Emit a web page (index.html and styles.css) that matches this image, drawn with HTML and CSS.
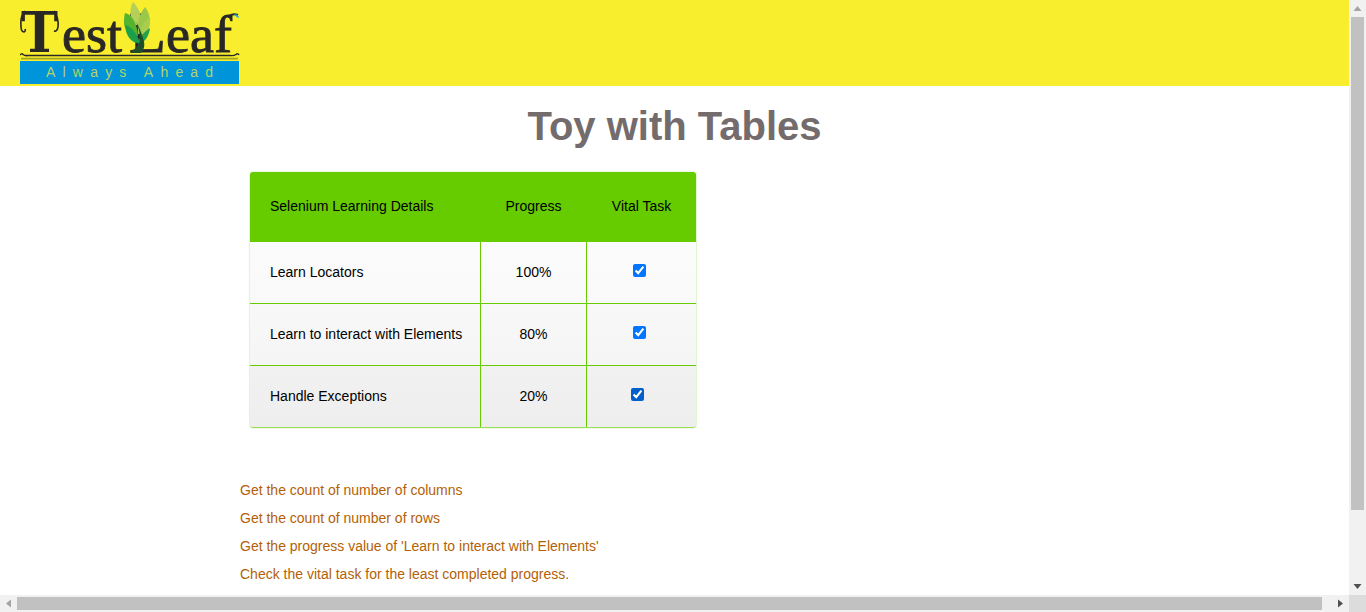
FILE: index.html
```html
<!DOCTYPE html>
<html lang="en">
<head>
<meta charset="utf-8">
<title>Toy with Tables</title>
<link rel="stylesheet" href="styles.css">
</head>
<body>
<div class="window">
  <main class="page">
    <header class="topbar">
      <svg class="logo" width="220" height="86" viewBox="0 0 220 86" role="img" aria-label="TestLeaf">
        <rect x="0" y="61" width="219" height="23" fill="#0095da"/>
        <path d="M0 55 Q2 53 3 54.5 Q5 56 8 55.5 H210 Q214 56 216 54.5 Q218 53 219 55" fill="none" stroke="#2a2826" stroke-width="1.5"/>
        <path d="M1 58.6 H218" stroke="#a5a61f" stroke-width="1.6"/>
        <text x="1" y="52" class="logo-t" textLength="37" lengthAdjust="spacingAndGlyphs">T</text>
        <path d="M5 11 Q0 16 1 26 Q1 32 4 32 Q6 31 5 29" fill="none" stroke="#2a2826" stroke-width="1.6"/>
        <path d="M34 11 Q39 18 38 27 Q37 32 34 31" fill="none" stroke="#2a2826" stroke-width="1.6"/>
        <text x="42" y="52" class="logo-a" textLength="60" lengthAdjust="spacingAndGlyphs">est</text>
        <text x="109" y="52" class="logo-l" textLength="37" lengthAdjust="spacingAndGlyphs">L</text>
        <text x="146" y="52" class="logo-a" textLength="66" lengthAdjust="spacingAndGlyphs">eaf</text>
        <path d="M208 17 Q212 13 218 15" fill="none" stroke="#2a2826" stroke-width="2"/>
        <path d="M214 14.5 Q218 13 219 18 Q216 17 214 14.5Z" fill="#2aa5dc"/>
        <path d="M113 2 C119 8 122 15 120 24 L114 26 C110 18 109 8 113 2Z" fill="#b4d058"/>
        <path d="M125 7 C131 14 131 26 127 33 L118 34 C117 24 119 14 125 7Z" fill="#9cc84a"/>
        <path d="M130 17 C131 25 127 34 120 38 C119 30 123 22 130 17Z" fill="#a9cd4e"/>
        <path d="M105 13 C111 14 117 22 118 36 C112 36 105 32 104 24 C104 20 104 16 105 13Z" fill="#55b32e"/>
        <path d="M105 25 C111 26 117 33 120 43 C113 44 106 38 105 25Z" fill="#1d9e4b"/>
        <path d="M130 28 C129 36 125 43 118 44 C119 37 124 32 130 28Z" fill="#21a24d"/>
        <path d="M115 20 C119 27 121 36 119.500 42 C118 46 114 50 110 53 H121 C125 48 125 44 123 38 C121 31 118 25 115 20Z" fill="#1f4f2a"/>
        <text x="26" y="77" class="logo-tag">Always Ahead</text>
      </svg>
    </header>
    <h1 class="title">Toy with Tables</h1>
    <section class="card">
      <table class="data">
        <thead>
          <tr><th class="c1">Selenium Learning Details</th><th class="c2">Progress</th><th class="c3">Vital Task</th></tr>
        </thead>
        <tbody>
          <tr class="r1"><td class="c1">Learn Locators</td><td class="c2">100%</td><td class="c3"><input class="box box-a" type="checkbox" checked></td></tr>
          <tr class="r2"><td class="c1">Learn to interact with Elements</td><td class="c2">80%</td><td class="c3"><input class="box box-a" type="checkbox" checked></td></tr>
          <tr class="r3"><td class="c1">Handle Exceptions</td><td class="c2">20%</td><td class="c3"><input class="box box-b" type="checkbox" checked></td></tr>
        </tbody>
      </table>
    </section>
    <ul class="tasks">
      <li>Get the count of number of columns</li>
      <li>Get the count of number of rows</li>
      <li>Get the progress value of 'Learn to interact with Elements'</li>
      <li>Check the vital task for the least completed progress.</li>
    </ul>
  </main>
  <aside class="vbar">
    <svg class="arrow" width="17" height="17" viewBox="0 0 17 17"><path d="M8.5 6 L12.5 11 H4.5Z" fill="#a3a3a3"/></svg>
    <div class="vtrack"><div class="vthumb"></div></div>
    <svg class="arrow" width="17" height="17" viewBox="0 0 17 17"><path d="M8.5 11 L12.5 6 H4.5Z" fill="#505050"/></svg>
  </aside>
  <div class="hbar">
    <svg class="arrow" width="17" height="17" viewBox="0 0 17 17"><path d="M6 8.5 L11 4.5 V12.5Z" fill="#a3a3a3"/></svg>
    <div class="htrack"><div class="hthumb"></div></div>
    <svg class="arrow" width="17" height="17" viewBox="0 0 17 17"><path d="M11 8.5 L6 4.5 V12.5Z" fill="#505050"/></svg>
  </div>
  <div class="corner"></div>
</div>
</body>
</html>
```
FILE: styles.css
```css
html, body { margin: 0; padding: 0; height: 100%; overflow: hidden; }
body { font-family: "Liberation Sans", Arial, sans-serif; color: #000; background: #fff; }
.window { display: grid; grid-template-columns: 1349px 17px; grid-template-rows: 595px 17px; width: 1366px; height: 612px; }
.page { overflow: hidden; background: #fff; }
.topbar { height: 86px; background: #f8ee2d; padding-left: 20px; box-sizing: border-box; }
.logo { display: block; }
.logo-t { font: 700 56px "DejaVu Serif", serif; fill: #2a2826; }
.logo-l { font: 400 56px "Liberation Serif", serif; fill: #2a2826; stroke: #2a2826; stroke-width: .9px; }
.logo-a { font: 400 53px "Liberation Serif", serif; fill: #2a2826; stroke: #2a2826; stroke-width: .9px; }
.logo-tag { font: 14px "Liberation Sans", sans-serif; letter-spacing: 7.2px; fill: #b3d468; }
.title { margin: 0; padding-top: 17px; height: 69px; box-sizing: border-box; text-align: center; font-size: 40px; line-height: 46px; font-weight: 700; color: #736b6c; }
.card { width: 446px; margin: 17px 0 0 250px; border-radius: 3px; box-shadow: 0 1px 1px rgba(102,204,0,.7), 0 0 2px rgba(102,204,0,.4); overflow: hidden; }
.data { width: 446px; table-layout: fixed; border-collapse: separate; border-spacing: 0; font-size: 14px; }
.data th { height: 70px; padding: 0 0 2px 1px; box-sizing: border-box; background: #66cc00; font-weight: 400; }
.data td { height: 62px; padding: 0 0 2px; box-sizing: border-box; border-top: 1px solid #66cc00; }
.data td + td { border-left: 1px solid #66cc00; }
.data tbody .r1 td { height: 61px; border-top: 0; }
.c1 { width: 230px; text-align: left; padding-left: 20px !important; box-sizing: border-box; }
.c2 { width: 106px; text-align: center; }
.c3 { text-align: center; }
.r1 td { background: linear-gradient(#fbfbfb, #f9f9f9); }
.r2 td { background: linear-gradient(#f8f8f8, #f5f5f5); }
.r3 td { background: linear-gradient(#f1f1f1, #eeeeee); }
.box { width: 13px; height: 13px; margin: 0 0 3px; accent-color: #0075ff; vertical-align: middle; }
.box-a { transform: translateX(-2px); }
.box-b { transform: translateX(-4px); accent-color: #005fcc; }
.tasks { list-style: none; margin: 49px 0 0 240px; padding: 0; font-size: 14px; color: #b45f06; }
.tasks li { height: 28px; line-height: 28px; }
.vbar { display: flex; flex-direction: column; background: #f1f1f1; }
.hbar { display: flex; background: #f1f1f1; }
.arrow { flex: none; display: block; }
.vtrack { flex: 1; padding: 0 2px; }
.vthumb { height: 493px; background: #c1c1c1; }
.htrack { flex: 1; padding: 2px 0; }
.hthumb { width: 1305px; height: 13px; background: #c1c1c1; }
.corner { background: #dcdcdc; }
```
